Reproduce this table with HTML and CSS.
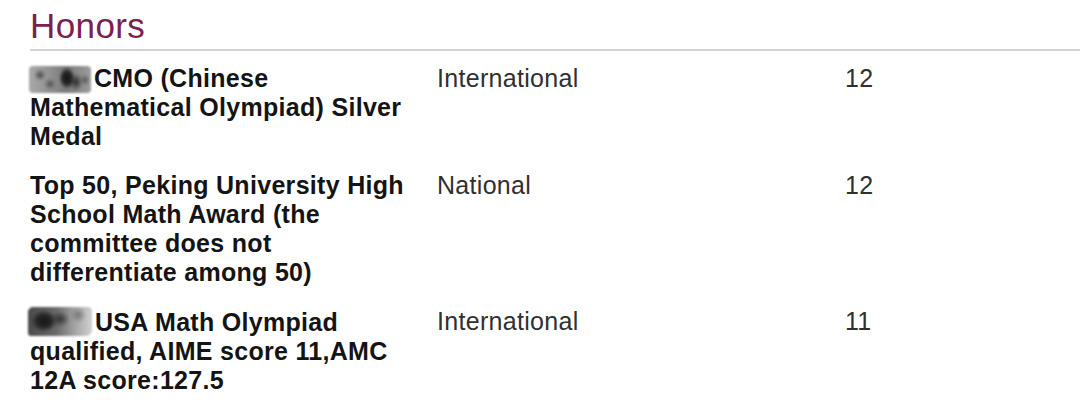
FILE: index.html
```html
<!DOCTYPE html>
<html lang="en">
<head>
<meta charset="utf-8">
<title>Honors</title>
<link rel="stylesheet" href="styles.css">
</head>
<body>
<section class="honors">
  <h2 class="section-title">Honors</h2>
  <div class="honor-table">
    <div class="honor-row">
      <div class="honor-name"><span class="redact redact-a"></span>CMO (Chinese Mathematical Olympiad) Silver Medal</div>
      <div class="honor-level">International</div>
      <div class="honor-grade">12</div>
    </div>
    <div class="honor-row">
      <div class="honor-name">Top 50, Peking University High School Math Award (the committee does not differentiate among 50)</div>
      <div class="honor-level">National</div>
      <div class="honor-grade">12</div>
    </div>
    <div class="honor-row">
      <div class="honor-name"><span class="redact redact-b"></span>USA Math Olympiad qualified, AIME score 11,AMC 12A score:127.5</div>
      <div class="honor-level">International</div>
      <div class="honor-grade">11</div>
    </div>
  </div>
</section>
</body>
</html>
```
FILE: styles.css
```css
html, body {
  margin: 0;
  padding: 0;
  background: #ffffff;
}

body {
  font-family: "Liberation Sans", Arial, Helvetica, sans-serif;
  width: 1080px;
  height: 415px;
  overflow: hidden;
}

.honors {
  padding-left: 30px;
}

.section-title {
  margin: 0;
  padding-top: 5px;
  padding-bottom: 3px;
  font-size: 35px;
  line-height: 41px;
  font-weight: normal;
  letter-spacing: 0.4px;
  color: #7a2150;
  border-bottom: 2px solid #d2d2d2;
}

.honor-table {
  display: flex;
  flex-direction: column;
  padding-top: 3px;
}

.honor-row {
  display: grid;
  grid-template-columns: 407px 408px 1fr;
  padding: 10px 0;
  font-size: 25px;
  line-height: 29px;
  letter-spacing: 0.3px;
}

.honor-name {
  font-weight: bold;
  color: #141414;
  padding-right: 22px;
}

.honor-level,
.honor-grade {
  color: #303030;
}

.redact {
  display: inline-block;
  margin-right: 3px;
  filter: blur(1.1px);
}

.redact-a {
  width: 62px;
  height: 27px;
  margin-left: -1px;
  vertical-align: -6px;
  background:
    radial-gradient(ellipse 8px 11px at 38px 12px, #151515 0%, #262626 55%, rgba(60,60,60,0) 100%),
    radial-gradient(ellipse 7px 9px at 47px 16px, #2c2c2c 0%, rgba(70,70,70,0) 100%),
    radial-gradient(ellipse 6px 6px at 11px 9px, #4a4a4a 0%, rgba(110,110,110,0) 100%),
    radial-gradient(ellipse 6px 6px at 21px 18px, #555 0%, rgba(130,130,130,0) 100%),
    radial-gradient(ellipse 5px 6px at 56px 14px, #5a5a5a 0%, rgba(130,130,130,0) 100%),
    linear-gradient(90deg, #a9a9a9 0%, #8f8f8f 35%, #7a7a7a 60%, #9c9c9c 100%);
  border-radius: 4px;
}

.redact-b {
  width: 64px;
  height: 29px;
  margin-left: -2px;
  vertical-align: -5px;
  background:
    radial-gradient(ellipse 13px 11px at 16px 14px, #171717 0%, #262626 55%, rgba(60,60,60,0) 100%),
    radial-gradient(ellipse 10px 8px at 32px 12px, #333 0%, rgba(90,90,90,0) 100%),
    radial-gradient(ellipse 8px 8px at 50px 8px, #777 0%, rgba(160,160,160,0) 100%),
    linear-gradient(90deg, #4a4a4a 0%, #6a6a6a 45%, #a8a8a8 75%, #d0d0d0 100%);
  border-radius: 5px 4px 6px 3px;
}
```
